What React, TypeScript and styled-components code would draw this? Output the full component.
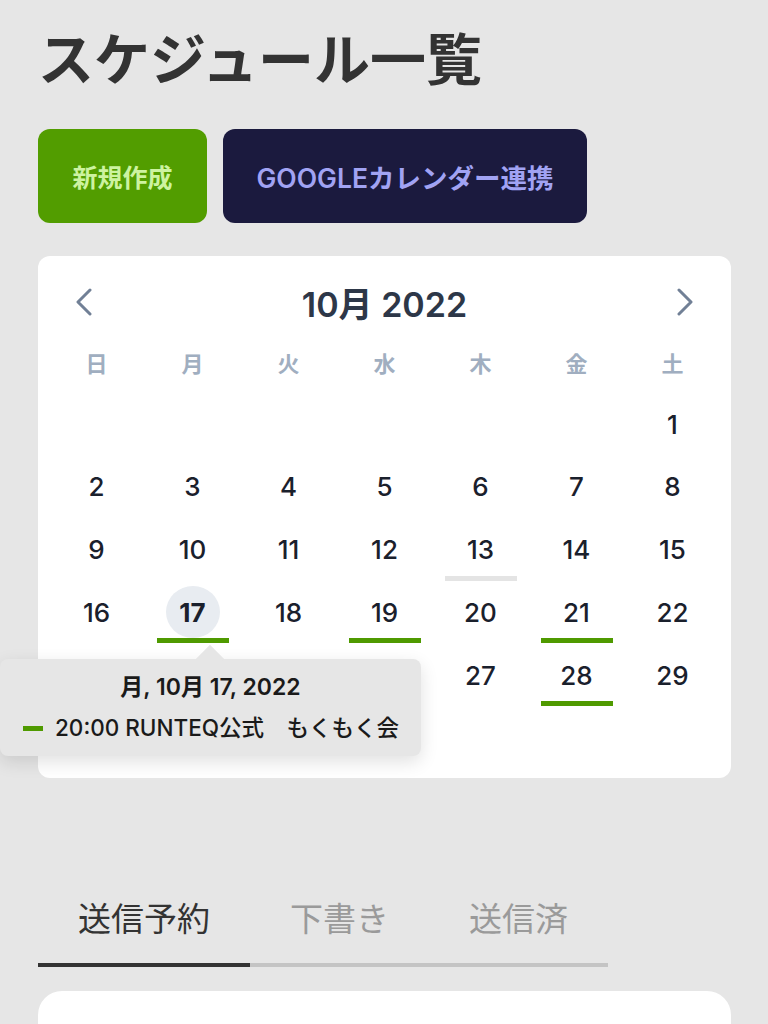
import React from 'react';
import styled, { createGlobalStyle } from 'styled-components';

const GlobalStyle = createGlobalStyle`
  html, body {
    margin: 0;
    padding: 0;
    background: #e6e6e6;
  }
  body {
    font-family: Inter, "Noto Sans CJK JP", sans-serif;
    overflow: hidden;
  }
`;

const weekdays = ['日', '月', '火', '水', '木', '金', '土'];

// October 2022 starts on a Saturday
const days: (number | null)[] = [
  ...Array(6).fill(null),
  ...Array.from({ length: 31 }, (_, i) => i + 1),
];

const eventDays: Record<number, 'event' | 'today'> = {
  13: 'today',
  17: 'event',
  19: 'event',
  21: 'event',
  28: 'event',
};

const ChevronLeft = () => (
  <svg width="18" height="28" viewBox="0 0 18 28">
    <path d="M15 2 L3 14 L15 26" fill="none" stroke="#718096" strokeWidth="3" strokeLinecap="round" strokeLinejoin="round" />
  </svg>
);

const ChevronRight = () => (
  <svg width="18" height="28" viewBox="0 0 18 28">
    <path d="M3 2 L15 14 L3 26" fill="none" stroke="#718096" strokeWidth="3" strokeLinecap="round" strokeLinejoin="round" />
  </svg>
);

const App = () => {
  return (
    <>
      <GlobalStyle />
      <Page>
        <Title>スケジュール一覧</Title>
        <Actions>
          <ActionButton $variant="green">新規作成</ActionButton>
          <ActionButton $variant="navy">GOOGLEカレンダー連携</ActionButton>
        </Actions>

        <CalendarCard>
          <CalendarHeader>
            <NavButton aria-label="前の月">
              <ChevronLeft />
            </NavButton>
            <MonthTitle>10月 2022</MonthTitle>
            <NavButton aria-label="次の月">
              <ChevronRight />
            </NavButton>
          </CalendarHeader>

          <WeekRow>
            {weekdays.map((w) => (
              <Weekday key={w}>{w}</Weekday>
            ))}
          </WeekRow>

          <DayGrid>
            {days.map((d, i) => (
              <DayCell key={i}>
                {d && (
                  <>
                    <DayNumber $selected={d === 17}>{d}</DayNumber>
                    {eventDays[d] && <DayBar $kind={eventDays[d]} />}
                  </>
                )}
              </DayCell>
            ))}
          </DayGrid>

          <Popover>
            <PopoverDate>月, 10月 17, 2022</PopoverDate>
            <PopoverEvent>
              <EventDash />
              <span>20:00 RUNTEQ公式　もくもく会</span>
            </PopoverEvent>
          </Popover>
        </CalendarCard>

        <Tabs>
          <Tab $active>送信予約</Tab>
          <Tab>下書き</Tab>
          <Tab>送信済</Tab>
        </Tabs>

        <ListCard />
      </Page>
    </>
  );
};

export default App;

const Page = styled.div`
  padding: 23px 37px 0 38px;
`;

const Title = styled.h1`
  margin: 0;
  font-family: "Noto Sans CJK JP", sans-serif;
  font-size: 56px;
  line-height: 65px;
  font-weight: 700;
  color: #333333;
  letter-spacing: 0;
`;

const Actions = styled.div`
  display: flex;
  gap: 16px;
  margin-top: 41px;
`;

const ActionButton = styled.button<{ $variant: 'green' | 'navy' }>`
  height: 94px;
  width: ${({ $variant }) => ($variant === 'green' ? '169px' : '364px')};
  padding: 0;
  border: none;
  border-radius: 12px;
  font-family: Inter, "Noto Sans CJK JP", sans-serif;
  font-size: ${({ $variant }) => ($variant === 'green' ? '25px' : '26.5px')};
  font-weight: 600;
  background: ${({ $variant }) => ($variant === 'green' ? '#529d00' : '#1b1a3e')};
  color: ${({ $variant }) => ($variant === 'green' ? '#cdf3a0' : '#a1a3f3')};
`;

const CalendarCard = styled.div`
  position: relative;
  margin-top: 33px;
  background: #ffffff;
  border-radius: 12px;
  padding: 22px 0 3px;
`;

const CalendarHeader = styled.div`
  display: flex;
  align-items: center;
  justify-content: space-between;
  height: 48px;
  padding: 0 34px;
`;

const NavButton = styled.button`
  display: flex;
  align-items: center;
  justify-content: center;
  width: 24px;
  height: 40px;
  padding: 0;
  border: none;
  background: none;
`;

const MonthTitle = styled.div`
  font-size: 34px;
  font-weight: 600;
  color: #2d3748;
`;

const WeekRow = styled.div`
  display: grid;
  grid-template-columns: repeat(7, 96px);
  justify-content: center;
  margin-top: 16px;
  margin-bottom: 16px;
`;

const Weekday = styled.div`
  height: 40px;
  display: flex;
  align-items: center;
  justify-content: center;
  font-size: 22px;
  font-weight: 600;
  color: #a0aec0;
`;

const DayGrid = styled.div`
  display: grid;
  grid-template-columns: repeat(7, 96px);
  grid-auto-rows: 62.75px;
  justify-content: center;
`;

const DayCell = styled.div`
  display: flex;
  flex-direction: column;
  align-items: center;
`;

const DayNumber = styled.div<{ $selected?: boolean }>`
  width: 54px;
  height: 52px;
  border-radius: 50%;
  display: flex;
  align-items: center;
  justify-content: center;
  font-size: 26px;
  font-weight: ${({ $selected }) => ($selected ? 700 : 500)};
  color: #1a202c;
  background: ${({ $selected }) => ($selected ? '#e8ecf1' : 'transparent')};
`;

const DayBar = styled.div<{ $kind: 'event' | 'today' }>`
  width: 72px;
  height: 5px;
  background: ${({ $kind }) => ($kind === 'event' ? '#4f9a00' : '#e4e4e4')};
`;

const Popover = styled.div`
  position: absolute;
  z-index: 2;
  left: -38px;
  top: 403px;
  width: 421px;
  box-sizing: border-box;
  padding: 13px 0 13px 23px;
  background: #e6e6e6;
  border-radius: 8px;
  box-shadow: 0 6px 18px rgba(0, 0, 0, 0.12);
  white-space: nowrap;

  &::before {
    content: '';
    position: absolute;
    left: 200px;
    top: -10px;
    width: 20px;
    height: 20px;
    background: #e6e6e6;
    transform: rotate(45deg);
  }
`;

const PopoverDate = styled.div`
  position: relative;
  margin-left: -23px;
  text-align: center;
  font-size: 23px;
  line-height: 30px;
  font-weight: 600;
  color: #1a1a1a;
`;

const PopoverEvent = styled.div`
  display: flex;
  align-items: center;
  gap: 12px;
  margin-top: 11px;
  font-size: 22.5px;
  line-height: 30px;
  font-weight: 500;
  color: #1a1a1a;
`;

const EventDash = styled.span`
  flex: none;
  width: 20px;
  height: 5px;
  background: #4f9a00;
`;

const Tabs = styled.div`
  display: inline-flex;
  margin-top: 116px;
`;

const Tab = styled.div<{ $active?: boolean }>`
  padding: 0 40px 23px;
  font-family: "Noto Sans CJK JP", sans-serif;
  font-size: 33px;
  line-height: 46px;
  font-weight: 400;
  color: ${({ $active }) => ($active ? '#333333' : '#9a9a9a')};
  border-bottom: 4px solid ${({ $active }) => ($active ? '#333333' : '#c4c4c4')};
`;

const ListCard = styled.div`
  margin-top: 24px;
  height: 200px;
  background: #ffffff;
  border-radius: 24px 24px 0 0;
`;
